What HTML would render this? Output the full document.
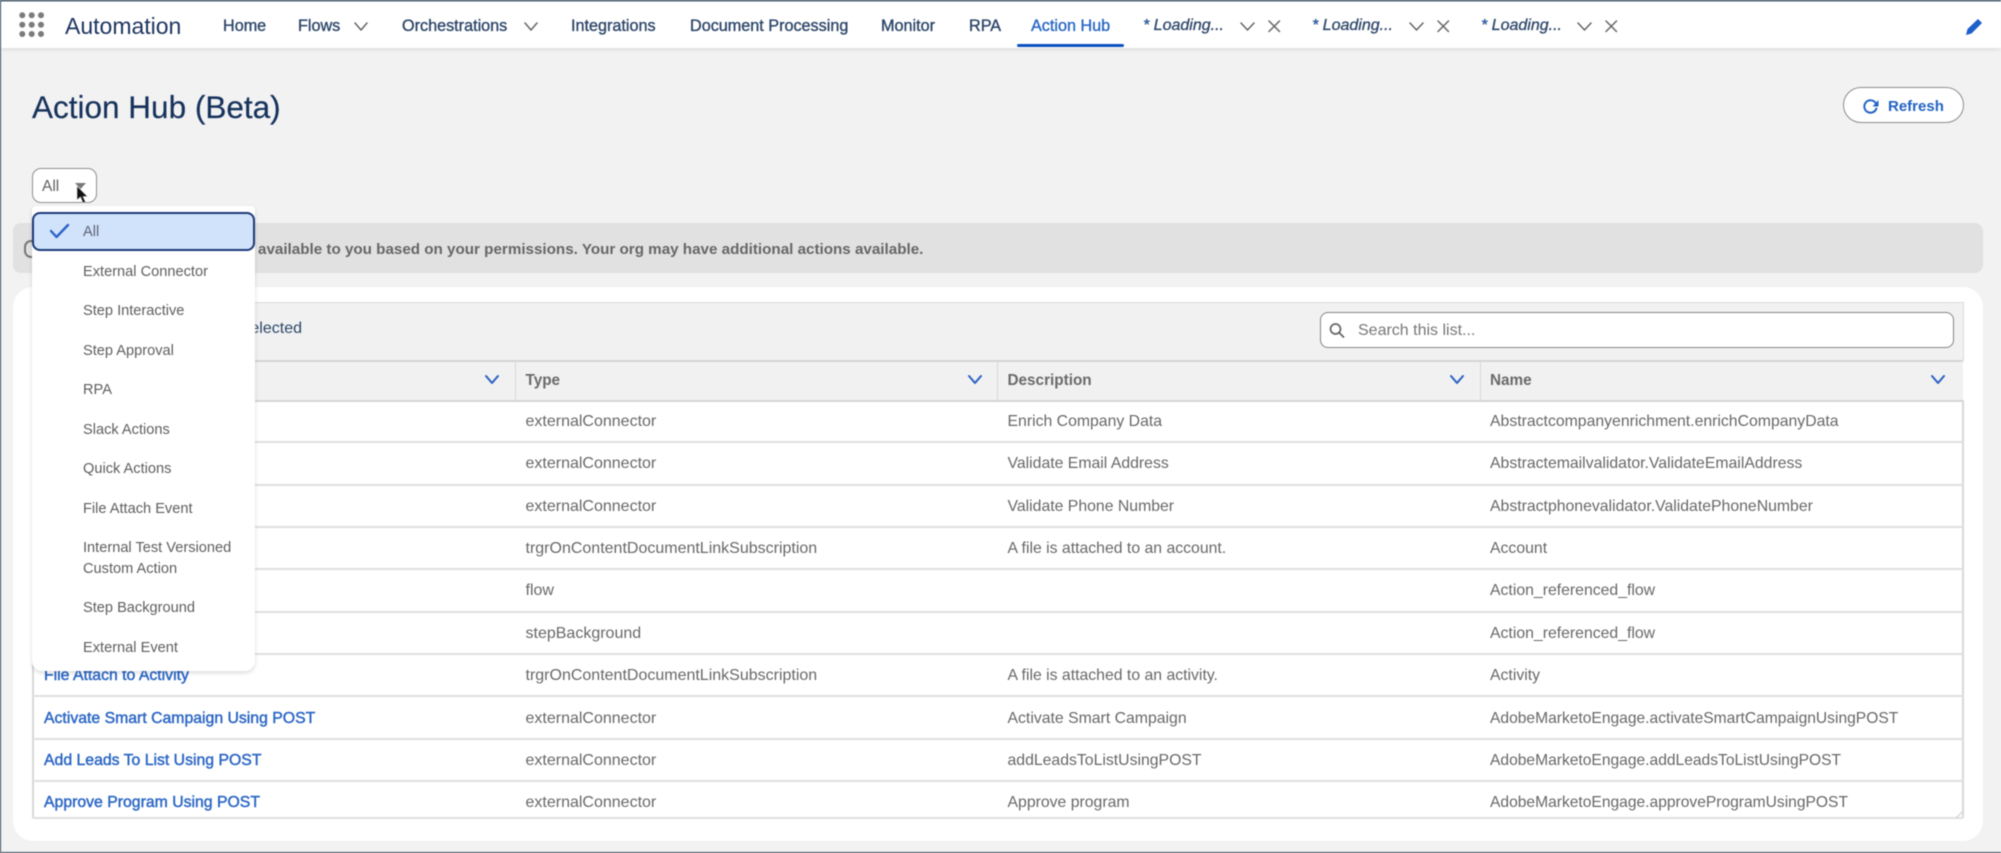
<!DOCTYPE html>
<html lang="en"><head><meta charset="utf-8"><title>Action Hub (Beta)</title>
<style>
html,body{margin:0;padding:0;width:2001px;height:853px;overflow:hidden;background:#f1f1f1}
#p{position:relative;width:2001px;height:853px;overflow:hidden;background:#f2f2f2;font-family:"Liberation Sans",Arial,sans-serif;filter:blur(.55px)}
#p div,#p span.t{position:absolute}
.t{white-space:nowrap;line-height:20px;height:20px}
.n{font-size:16.2px;color:#2c4568;top:16px;-webkit-text-stroke:.35px #2c4568}
.l{font-size:16px;font-style:italic;color:#2c4568;top:16px;-webkit-text-stroke:.3px #2c4568}
.l b{color:#1b5fc1;font-weight:normal}
.h{font-size:15.3px;font-weight:bold;color:#6a6a6a;top:370.7px}
.c{font-size:15.8px;color:#686868}
.ty{font-size:16px;left:525.5px}
.ad{font-size:15.6px}
.a{font-size:15.8px;color:#2b66c4;left:44px;-webkit-text-stroke:.45px #2b66c4}
.m{font-size:14.6px;color:#5e5e5e;left:83px}
.r{left:33px;width:1930px;height:2px;background:#e0e0e0}
</style></head><body>
<div id="p">
<!-- nav -->
<div style="left:0;top:0;width:2001px;height:48px;background:#fff;box-shadow:0 2px 4px rgba(0,0,0,.08)"></div>
<span class="t" style="left:65px;top:15px;font-size:23px;color:#1d3560;line-height:22px">Automation</span>
<span class="t n" style="left:223px">Home</span>
<span class="t n" style="left:298px">Flows</span>
<span class="t n" style="left:402px">Orchestrations</span>
<span class="t n" style="left:571px">Integrations</span>
<span class="t n" style="left:690px">Document Processing</span>
<span class="t n" style="left:881px">Monitor</span>
<span class="t n" style="left:969px">RPA</span>
<span class="t n" style="left:1031px;color:#2766c4;-webkit-text-stroke:.35px #2766c4">Action Hub</span>
<div style="left:1017px;top:44px;width:107px;height:3px;background:#0b50c0;border-radius:2px"></div>
<span class="t l" style="left:1143px"><b>*</b> Loading...</span>
<span class="t l" style="left:1312px"><b>*</b> Loading...</span>
<span class="t l" style="left:1481px"><b>*</b> Loading...</span>

<!-- header -->
<span class="t" style="left:32px;top:87px;font-size:31.5px;line-height:40px;height:40px;color:#16325c;-webkit-text-stroke:.2px #16325c">Action Hub (Beta)</span>
<div style="left:1843px;top:87px;width:119px;height:34px;border:1.5px solid #8c8c8c;border-radius:19px;background:#fff"></div>
<span class="t" style="left:1888px;top:96.500px;font-size:15px;font-weight:bold;color:#2263c4">Refresh</span>

<!-- select -->
<div style="left:32px;top:168px;width:63px;height:33px;border:1.5px solid #8f8f8f;border-radius:9px;background:#fff"></div>
<span class="t" style="left:42px;top:177px;font-size:15.500px;color:#5f5f5f">All</span>

<!-- banner -->
<div style="left:13px;top:223px;width:1970px;height:50px;background:#e1e1e1;border-radius:8px"></div>
<div style="left:24px;top:240px;width:10px;height:14px;border:2px solid #777;border-radius:10px"></div>
<span class="t" style="left:258px;top:239.500px;font-size:15.200px;font-weight:bold;color:#666">available to you based on your permissions. Your org may have additional actions available.</span>

<!-- card -->
<div style="left:13px;top:287px;width:1970px;height:554px;background:#fff;border-radius:20px"></div>
<div style="left:32px;top:302px;width:1930px;height:58px;background:#f1f1f1;border:1px solid #dcdcdc;border-bottom:0"></div>
<span class="t" style="left:200px;top:318.500px;font-size:16px;color:#2b4668;width:102px;text-align:right">0 Selected</span>
<div style="left:1320px;top:312px;width:632px;height:34px;border:1.5px solid #858585;border-radius:8px;background:#fff"></div>
<span class="t" style="left:1358px;top:320.500px;font-size:16px;color:#777">Search this list...</span>

<!-- table head -->
<div style="left:33px;top:360px;width:1930px;height:38px;background:#f1f1f1;border-top:2px solid #d5d5d5;border-bottom:2px solid #d5d5d5;box-sizing:content-box"></div>
<div style="left:515px;top:362px;width:1px;height:38px;background:#d8d8d8"></div>
<div style="left:997px;top:362px;width:1px;height:38px;background:#d8d8d8"></div>
<div style="left:1480px;top:362px;width:1px;height:38px;background:#d8d8d8"></div>
<span class="t h" style="left:525.5px">Type</span>
<span class="t h" style="left:1007.5px">Description</span>
<span class="t h" style="left:1490px">Name</span>

<!-- table borders and rows -->
<div style="left:32px;top:400px;width:2px;height:418px;background:#d8d8d8"></div>
<div style="left:1962px;top:400px;width:2px;height:418px;background:#d8d8d8"></div>
<div class="r" style="top:441px"></div><div class="r" style="top:483.5px"></div><div class="r" style="top:526px"></div><div class="r" style="top:568px"></div><div class="r" style="top:610.5px"></div><div class="r" style="top:653px"></div><div class="r" style="top:695px"></div><div class="r" style="top:737.5px"></div><div class="r" style="top:780px"></div><div class="r" style="top:816.5px"></div>

<span class="t c ty" style="top:412px">externalConnector</span><span class="t c" style="left:1007.5px;top:412px">Enrich Company Data</span><span class="t c" style="left:1490px;top:412px">Abstractcompanyenrichment.enrichCompanyData</span>
<span class="t c ty" style="top:454.3px">externalConnector</span><span class="t c" style="left:1007.5px;top:454.3px">Validate Email Address</span><span class="t c" style="left:1490px;top:454.3px">Abstractemailvalidator.ValidateEmailAddress</span>
<span class="t c ty" style="top:496.7px">externalConnector</span><span class="t c" style="left:1007.5px;top:496.7px">Validate Phone Number</span><span class="t c" style="left:1490px;top:496.7px">Abstractphonevalidator.ValidatePhoneNumber</span>
<span class="t c ty" style="top:539px">trgrOnContentDocumentLinkSubscription</span><span class="t c" style="left:1007.5px;top:539px">A file is attached to an account.</span><span class="t c" style="left:1490px;top:539px">Account</span>
<span class="t c ty" style="top:581.3px">flow</span><span class="t c" style="left:1490px;top:581.3px">Action_referenced_flow</span>
<span class="t c ty" style="top:623.7px">stepBackground</span><span class="t c" style="left:1490px;top:623.7px">Action_referenced_flow</span>
<span class="t a" style="top:666px">File Attach to Activity</span><span class="t c ty" style="top:666px">trgrOnContentDocumentLinkSubscription</span><span class="t c" style="left:1007.5px;top:666px">A file is attached to an activity.</span><span class="t c" style="left:1490px;top:666px">Activity</span>
<span class="t a" style="top:708.5px">Activate Smart Campaign Using POST</span><span class="t c ty" style="top:708.5px">externalConnector</span><span class="t c" style="left:1007.5px;top:708.5px">Activate Smart Campaign</span><span class="t c ad" style="left:1490px;top:708.5px">AdobeMarketoEngage.activateSmartCampaignUsingPOST</span>
<span class="t a" style="top:751px">Add Leads To List Using POST</span><span class="t c ty" style="top:751px">externalConnector</span><span class="t c" style="left:1007.5px;top:751px">addLeadsToListUsingPOST</span><span class="t c ad" style="left:1490px;top:751px">AdobeMarketoEngage.addLeadsToListUsingPOST</span>
<span class="t a" style="top:793.3px">Approve Program Using POST</span><span class="t c ty" style="top:793.3px">externalConnector</span><span class="t c" style="left:1007.5px;top:793.3px">Approve program</span><span class="t c ad" style="left:1490px;top:793.3px">AdobeMarketoEngage.approveProgramUsingPOST</span>

<!-- dropdown -->
<div style="left:32px;top:206px;width:223px;height:465px;background:#fff;border-radius:4px 4px 10px 10px;box-shadow:0 2px 4px rgba(0,0,0,.14)"></div>
<div style="left:32px;top:212px;width:219px;height:35px;background:#d1e2fb;border:2px solid #1b3a78;border-radius:8px"></div>
<span class="t m" style="top:222px;color:#5a6270">All</span>
<span class="t m" style="top:262px">External Connector</span>
<span class="t m" style="top:301.3px">Step Interactive</span>
<span class="t m" style="top:340.7px">Step Approval</span>
<span class="t m" style="top:380.3px">RPA</span>
<span class="t m" style="top:419.7px">Slack Actions</span>
<span class="t m" style="top:459.3px">Quick Actions</span>
<span class="t m" style="top:498.7px">File Attach Event</span>
<span class="t m" style="top:538.3px">Internal Test Versioned</span>
<span class="t m" style="top:559px">Custom Action</span>
<span class="t m" style="top:598.3px">Step Background</span>
<span class="t m" style="top:638px">External Event</span>

<!-- icons & frame -->
<svg width="2001" height="853" viewBox="0 0 2001 853" style="position:absolute;left:0;top:0" fill="none">
<g fill="#7b7b7b"><circle cx="22.3" cy="15.3" r="3"/><circle cx="31.7" cy="15.3" r="3"/><circle cx="41" cy="15.3" r="3"/><circle cx="22.3" cy="24.7" r="3"/><circle cx="31.7" cy="24.7" r="3"/><circle cx="41" cy="24.7" r="3"/><circle cx="22.3" cy="34" r="3"/><circle cx="31.7" cy="34" r="3"/><circle cx="41" cy="34" r="3"/></g>
<g stroke="#666" stroke-width="1.5" stroke-linecap="round" stroke-linejoin="round">
<path d="M355 23l6 7 6-7M525 23l6 7 6-7M1241 23l6.500 7 6.500-7M1410 23l6.500 7 6.500-7M1578 23l6.500 7 6.500-7"/>
<path d="M1269 21l10.500 10.500M1279.500 21l-10.500 10.500M1438 21l10.500 10.500M1448.500 21l-10.500 10.500M1606 21l10.500 10.500M1616.500 21l-10.500 10.500"/>
</g>
<g stroke="#2a61c2" stroke-width="2" stroke-linecap="round" stroke-linejoin="round">
<path d="M486 376l6 7 6-7M969 376l6 7 6-7M1451 376l6 7 6-7M1932 376l6 7 6-7"/>
</g>
<path d="M1966 35l1.500-6 10.500-10 4 4-10.500 10.500z" fill="#1b5fc8"/>
<path d="M1875.500 102.800A6.200 6.200 0 1 0 1876.400 108.500" stroke="#2263c4" stroke-width="2" stroke-linecap="round"/>
<path d="M1878.500 100v6.500h-6z" fill="#2263c4"/>
<circle cx="1335.500" cy="329" r="5" stroke="#666" stroke-width="1.700"/><path d="M1339.500 333l4 4" stroke="#666" stroke-width="1.800" stroke-linecap="round"/>
<path d="M51 231l5.500 6 11.500-12" stroke="#2c62c8" stroke-width="2.400" stroke-linecap="round" stroke-linejoin="round"/>
<path d="M75 183h11l-5.500 6z" fill="#777"/>
<path d="M77 186v14l3.500-3 2.500 6 2.500-1-2.500-5.500h4.500z" fill="#111" stroke="#ddd" stroke-width=".6"/>
<path d="M1956 818l6-6" stroke="#ccc"/>
<rect x=".5" y=".5" width="2001" height="852" stroke="#2d4557" stroke-width="1"/>
<path d="M0 .7H2001" stroke="#2d4557" stroke-width="1.400"/>
</svg>
</div>
</body></html>
